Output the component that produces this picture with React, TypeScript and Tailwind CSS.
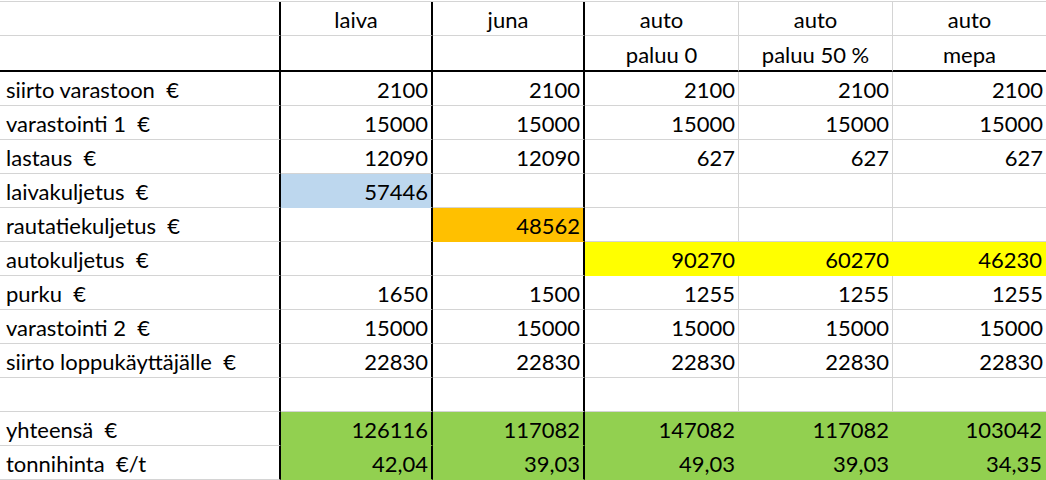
import React from 'react';

type Fill = 'blue' | 'orange' | 'yellow' | 'green' | null;

const fillClass: Record<string, string> = {
  blue: 'bg-[#bdd7ee]',
  orange: 'bg-[#ffc000]',
  yellow: 'bg-[#ffff00]',
  green: 'bg-[#92d050]',
};

const fillBorder: Record<string, string> = {
  blue: 'border-b-[#bdd7ee]',
  orange: 'border-b-[#ffc000]',
  yellow: 'border-b-[#ffff00]',
  green: 'border-b-[#92d050]',
};

const fillBorderR: Record<string, string> = {
  blue: 'border-r-[#bdd7ee]',
  orange: 'border-r-[#ffc000]',
  yellow: 'border-r-[#ffff00]',
  green: 'border-r-[#92d050]',
};

// column widths and right border style
const cols = [
  { w: 'w-[281px]', br: 'border-r-2 border-r-black', dark: true },
  { w: 'w-[152px]', br: 'border-r-2 border-r-black', dark: true },
  { w: 'w-[152px]', br: 'border-r-2 border-r-black', dark: true },
  { w: 'w-[154px]', br: 'border-r border-r-[#d4d4d4]', dark: false },
  { w: 'w-[154px]', br: 'border-r border-r-[#d4d4d4]', dark: false },
  { w: 'w-[153px]', br: '', dark: false },
];

type Row = { label: string; values: string[]; fills?: Fill[] };

const rows: Row[] = [
  { label: 'siirto varastoon  €', values: ['2100', '2100', '2100', '2100', '2100'] },
  { label: 'varastointi 1  €', values: ['15000', '15000', '15000', '15000', '15000'] },
  { label: 'lastaus  €', values: ['12090', '12090', '627', '627', '627'] },
  { label: 'laivakuljetus  €', values: ['57446', '', '', '', ''], fills: ['blue', null, null, null, null] },
  { label: 'rautatiekuljetus  €', values: ['', '48562', '', '', ''], fills: [null, 'orange', null, null, null] },
  { label: 'autokuljetus  €', values: ['', '', '90270', '60270', '46230'], fills: [null, null, 'yellow', 'yellow', 'yellow'] },
  { label: 'purku  €', values: ['1650', '1500', '1255', '1255', '1255'] },
  { label: 'varastointi 2  €', values: ['15000', '15000', '15000', '15000', '15000'] },
  { label: 'siirto loppukäyttäjälle  €', values: ['22830', '22830', '22830', '22830', '22830'] },
  { label: '', values: ['', '', '', '', ''] },
  { label: 'yhteensä  €', values: ['126116', '117082', '147082', '117082', '103042'], fills: ['green', 'green', 'green', 'green', 'green'] },
  { label: 'tonnihinta  €/t', values: ['42,04', '39,03', '49,03', '39,03', '34,35'], fills: ['green', 'green', 'green', 'green', 'green'] },
];

function Cell({ col, fill, align, thickBottom, children }: {
  col: number;
  fill?: Fill;
  align: 'left' | 'right' | 'center';
  thickBottom?: boolean;
  children?: React.ReactNode;
}) {
  const c = cols[col];
  const alignCls = align === 'left' ? 'justify-start pl-[6px]' : align === 'right' ? 'justify-end pr-[3px]' : 'justify-center';
  const bottom = thickBottom
    ? 'h-[36px] border-b-2 border-b-black'
    : `h-[34px] border-b ${fill ? fillBorder[fill] : 'border-b-[#d4d4d4]'}`;
  const right = fill && !c.dark ? `border-r ${fillBorderR[fill]}` : c.br;
  return (
    <div className={`${c.w} shrink-0 box-border flex items-end pb-[2px] ${alignCls} ${bottom} ${right} ${fill ? fillClass[fill] : 'bg-white'} whitespace-pre leading-[26px]`}>
      {children}
    </div>
  );
}

export default function App() {
  const head1 = ['', 'laiva', 'juna', 'auto', 'auto', 'auto'];
  const head2 = ['', '', '', 'paluu 0', 'paluu 50 %', 'mepa'];
  return (
    <div className="w-[1046px] h-[480px] overflow-hidden bg-white pt-[1px] text-black text-[22px]" style={{ fontFamily: 'Lato, "Open Sans", sans-serif' }}>
      <div className="border-t border-t-[#d4d4d4]">
        <div className="flex">
          {head1.map((h, i) => (
            <Cell key={i} col={i} align="center">{h}</Cell>
          ))}
        </div>
        <div className="flex">
          {head2.map((h, i) => (
            <Cell key={i} col={i} align="center" thickBottom>{h}</Cell>
          ))}
        </div>
        {rows.map((r, ri) => (
          <div key={ri} className="flex">
            <Cell col={0} align="left">{r.label}</Cell>
            {r.values.map((v, vi) => (
              <Cell key={vi} col={vi + 1} align="right" fill={r.fills ? r.fills[vi] : null}>{v}</Cell>
            ))}
          </div>
        ))}
      </div>
    </div>
  );
}
